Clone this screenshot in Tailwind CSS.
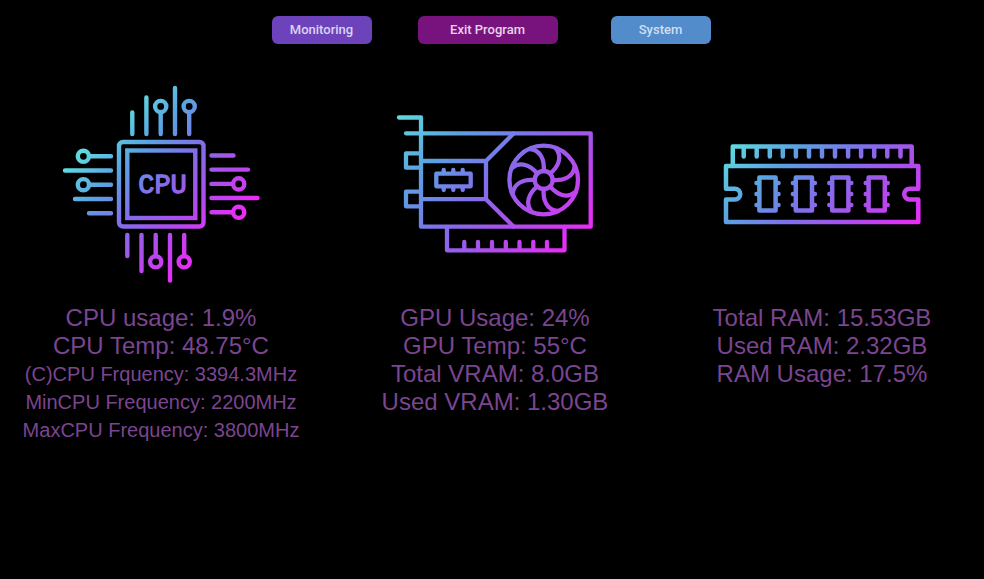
<!DOCTYPE html>
<html lang="en">
<head>
<meta charset="utf-8">
<meta name="viewport" content="width=device-width, initial-scale=1">
<title>System Monitor</title>
<script src="https://cdn.jsdelivr.net/npm/@tailwindcss/browser@4"></script>
</head>
<body class="min-h-screen bg-black font-['Liberation_Sans',Arial,sans-serif] text-[#7b4590]">
<nav class="flex justify-center pt-4 pr-0.5 font-[Roboto,sans-serif] text-[13px] leading-5 font-medium">
  <button type="button" class="mr-[46px] h-7 w-[100px] rounded-md bg-[#6c43bb] text-[#dcd3f0]">Monitoring</button>
  <button type="button" class="mr-[53px] h-7 w-[140px] rounded-md bg-[#78137d] text-[#e6d3ea]">Exit Program</button>
  <button type="button" class="h-7 w-[100px] rounded-md bg-[#528ccb] text-[#cfdff2]">System</button>
</nav>
<main class="grid grid-cols-[322fr_346fr_316fr] pt-10 text-center text-2xl leading-7">
  <section class="flex flex-col items-center">
    <svg class="size-[200px]" viewBox="61 84 200 200" fill="none" stroke="url(#g1)" stroke-width="4.4" stroke-linecap="round" stroke-linejoin="round" role="img" aria-label="Processor">
      <defs>
        <linearGradient id="g1" gradientUnits="userSpaceOnUse" x1="106" y1="129" x2="216" y2="239">
          <stop offset="0" stop-color="#5fd9de"/><stop offset=".25" stop-color="#5ba2e2"/><stop offset=".5" stop-color="#816eea"/><stop offset=".75" stop-color="#b04cec"/><stop offset="1" stop-color="#ea2cf8"/>
        </linearGradient>
      </defs>
      <rect x="119" y="142" width="84.5" height="84.5" rx="4"/>
      <rect x="127.3" y="150.5" width="68" height="67.5" stroke-linejoin="miter"/>
      <path d="M132.3 112.5V134M146.4 97.5V134M160.7 112V134M175 88V134M189.2 112V134"/>
      <path d="M127.3 235V256M141.5 235V271M155.7 235V256M170 235V280.5M184.2 235V256"/>
      <path d="M89 156.3H111M65 170.5H111M89 184.7H111M75 199H111M89 213.2H111"/>
      <path d="M211.5 155.5H233.5M211.5 169.6H248M211.5 183.9H233M211.5 198H257.5M211.5 212.3H233"/>
      <circle cx="160.7" cy="106.5" r="5.6"/><circle cx="189.2" cy="106.5" r="5.6"/>
      <circle cx="83.4" cy="156.3" r="5.6"/><circle cx="83.4" cy="184.7" r="5.6"/>
      <circle cx="238.7" cy="183.9" r="5.6"/><circle cx="238.7" cy="212.3" r="5.6"/>
      <circle cx="155.7" cy="261.8" r="5.6"/><circle cx="184.2" cy="261.8" r="5.6"/>
      <text x="162.5" y="193" text-anchor="middle" fill="url(#g1)" stroke-width="1.3" class="font-['Liberation_Mono',monospace] text-[27px]">CPU</text>
    </svg>
    <div class="mt-5">
      <p>CPU usage: 1.9%</p>
      <p>CPU Temp: 48.75°C</p>
      <p class="text-xl leading-7">(C)CPU Frquency: 3394.3MHz</p>
      <p class="text-xl leading-7">MinCPU Frequency: 2200MHz</p>
      <p class="text-xl leading-7">MaxCPU Frequency: 3800MHz</p>
    </div>
  </section>
  <section class="flex flex-col items-center">
    <svg class="size-[200px]" viewBox="395 84 200 200" fill="none" stroke="url(#g2)" stroke-width="4.3" stroke-linecap="round" stroke-linejoin="round" role="img" aria-label="Graphics card">
      <defs>
        <linearGradient id="g2" gradientUnits="userSpaceOnUse" x1="419" y1="96" x2="570" y2="247">
          <stop offset="0" stop-color="#5fd9de"/><stop offset=".25" stop-color="#5ba2e2"/><stop offset=".5" stop-color="#7f70ea"/><stop offset=".75" stop-color="#b04cec"/><stop offset="1" stop-color="#ea2cf8"/>
        </linearGradient>
        <linearGradient id="g2fan" href="#g2" x1="-124.7" y1="-84" x2="26.3" y2="67"/>
      </defs>
      <path d="M399 117.5H421V226.7H590.7V133.3H406"/>
      <path d="M421 153.3H406V167.7H421M421 191.7H406V206.3H421"/>
      <path d="M421 161H486V199.2H421M486 161L513.5 133.5M486 199.2L513.5 226.5"/>
      <rect x="436.3" y="173.7" width="34.4" height="12.6"/>
      <path d="M443.7 173V170M453.3 173V170M462.7 173V170M443.7 187V190M453.3 187V190M462.7 187V190"/>
      <path d="M447 227V250.3H564.5V227"/>
      <path d="M464.3 249V242M478 249V242M492 249V242M505.8 249V242M519.5 249V242M533.3 249V242M547 249V242"/>
      <g transform="translate(543.7 180)" stroke="url(#g2fan)">
        <circle r="34.3"/><circle r="9"/>
        <path d="M0-9C1-20-3-30-14-31M6.4-6.4C14.8-13.4 19-23.3 12-31.8M9 0C20 1 30-3 31-14M6.4 6.4C13.4 14.8 23.3 19 31.8 12M0 9C-1 20 3 30 14 31M-6.4 6.4C-14.8 13.4-19 23.3-12 31.8M-9 0C-20-1-30 3-31 14M-6.4-6.4C-13.4-14.8-23.3-19-31.8-12"/>
      </g>
    </svg>
    <div class="mt-5">
      <p>GPU Usage: 24%</p>
      <p>GPU Temp: 55°C</p>
      <p>Total VRAM: 8.0GB</p>
      <p>Used VRAM: 1.30GB</p>
    </div>
  </section>
  <section class="flex flex-col items-center pr-2">
    <svg class="size-[200px]" viewBox="722 84 200 200" fill="none" stroke="url(#g3)" stroke-width="4.5" stroke-linecap="round" stroke-linejoin="round" role="img" aria-label="Memory module">
      <defs>
        <linearGradient id="g3" gradientUnits="userSpaceOnUse" x1="748" y1="131" x2="879" y2="262">
          <stop offset="0" stop-color="#5fd9de"/><stop offset=".25" stop-color="#5ba2e2"/><stop offset=".5" stop-color="#7f70ea"/><stop offset=".75" stop-color="#b04cec"/><stop offset="1" stop-color="#ea2cf8"/>
        </linearGradient>
      </defs>
      <path d="M726 166H918.3V188.8H909.5A5.3 5.3 0 0 0 909.5 199.4H918.3V222H726V199.4H735A5.3 5.3 0 0 0 735 188.8H726Z"/>
      <path d="M732.8 166V146.5H911.7V166"/>
      <path d="M743.7 147V156.5M756.7 147V156.5M769.8 147V156.5M782.8 147V156.5M795.9 147V156.5M809 147V156.5M822 147V156.5M835 147V156.5M848.1 147V156.5M861.1 147V156.5M874.2 147V156.5M887.3 147V156.5M900.5 147V156.5"/>
      <path d="M759.4 177.5h16.2v33.1h-16.2zm-2.9 5.5h2m-2 11h2m-2 11h2m17.5-22h2.5m-2.5 11h2.5m-2.5 11h2.5"/>
      <path d="M795.8 177.5h16.2v33.1h-16.2zm-2.9 5.5h2m-2 11h2m-2 11h2m17.5-22h2.5m-2.5 11h2.5m-2.5 11h2.5"/>
      <path d="M832.2 177.5h16.2v33.1h-16.2zm-2.9 5.5h2m-2 11h2m-2 11h2m17.5-22h2.5m-2.5 11h2.5m-2.5 11h2.5"/>
      <path d="M868.6 177.5h16.2v33.1h-16.2zm-2.9 5.5h2m-2 11h2m-2 11h2m17.5-22h2.5m-2.5 11h2.5m-2.5 11h2.5"/>
    </svg>
    <div class="mt-5">
      <p>Total RAM: 15.53GB</p>
      <p>Used RAM: 2.32GB</p>
      <p>RAM Usage: 17.5%</p>
    </div>
  </section>
</main>
</body>
</html>
